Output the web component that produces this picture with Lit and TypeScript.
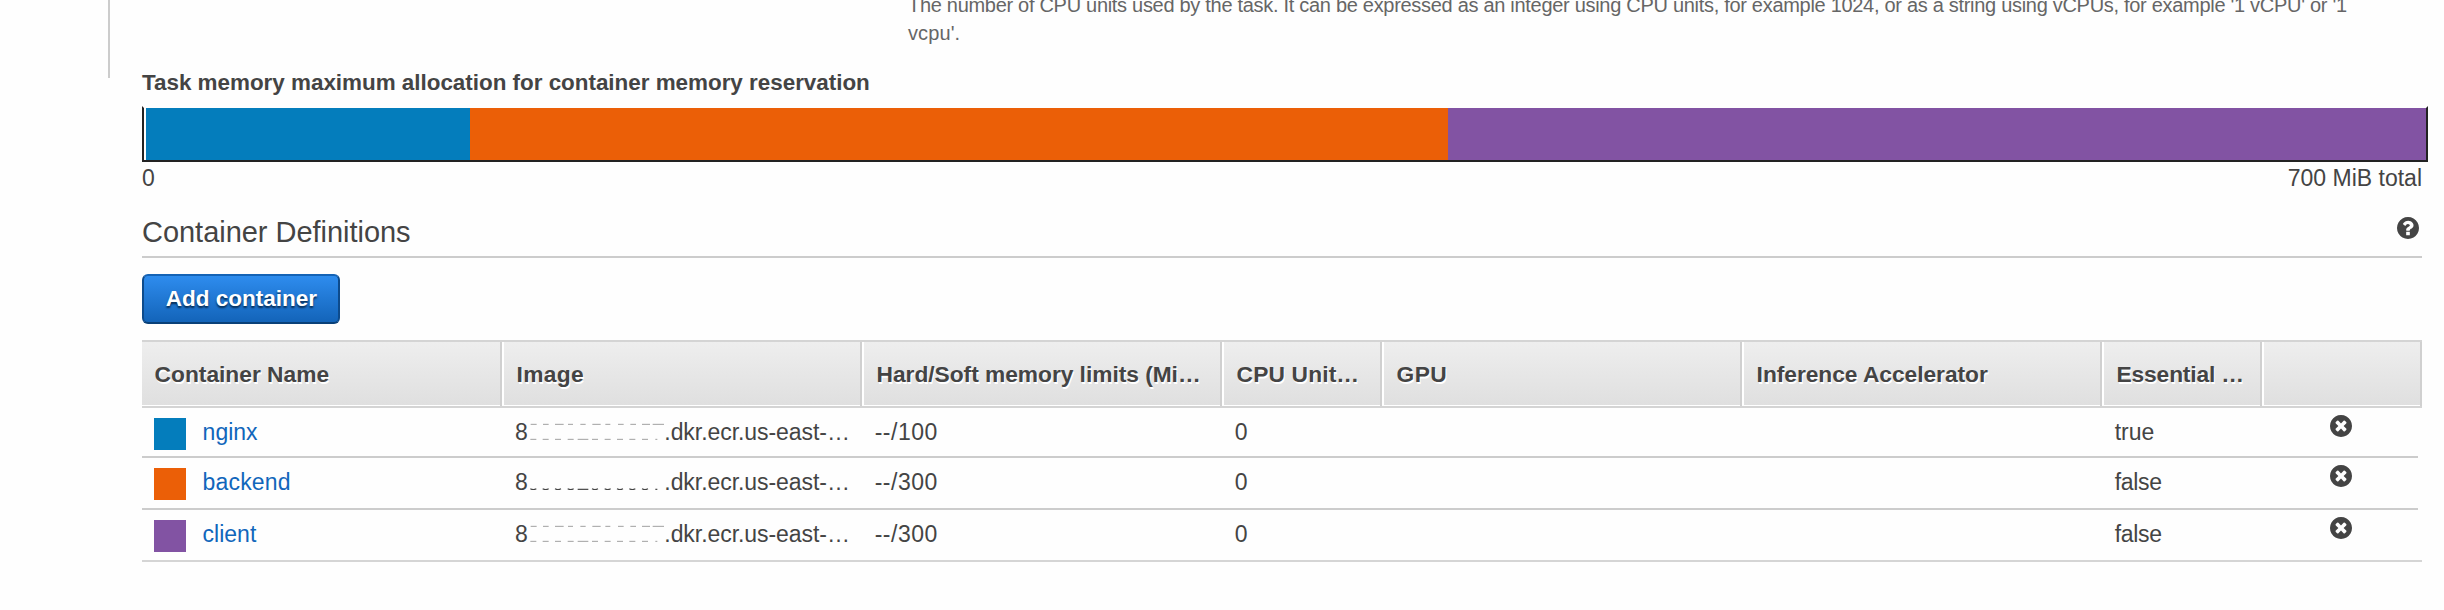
import { LitElement, html, css, svg } from "lit";
import { customElement } from "lit/decorators.js";

interface Container {
  name: string;
  nameClass: string;
  color: string;
  memory: number;
  essential: string;
  rowClass: string;
  masked: boolean;
}

const upper: [number, number][] = [[8, 26], [45, 62], [81, 107], [120, 135], [157, 173], [193, 218], [232, 247], [270, 287], [307, 324], [342, 366], [374, 408]];
const lower: [number, number][] = [[7, 25], [44, 62], [81, 99], [119, 137], [149, 181], [192, 210], [230, 248], [267, 285], [304, 322], [342, 360], [382, 388]];

const containers: Container[] = [
  { name: "nginx", nameClass: "", color: "#047dbc", memory: 100, essential: "true", rowClass: "first", masked: false },
  { name: "backend", nameClass: "wide", color: "#eb5f07", memory: 300, essential: "false", rowClass: "masked", masked: true },
  { name: "client", nameClass: "", color: "#8253a3", memory: 300, essential: "false", rowClass: "last", masked: false },
];

const columns: [string, string][] = [
  ["Container Name", ""],
  ["Image", "wider"],
  ["Hard/Soft memory limits (Mi…", "close"],
  ["CPU Unit…", "wide"],
  ["GPU", "wider"],
  ["Inference Accelerator", "close"],
  ["Essential …", "snug"],
  ["", ""],
];

const disc = "q0 209-103 385.5t-279.5 279.5-385.5 103-385.5-103-279.5-279.5-103-385.5 103-385.5 279.5-279.5 385.5-103 385.5 103 279.5 279.5 103 385.5z";

@customElement("app-root")
export class AppRoot extends LitElement {
  static styles = css`
    :host {
      display: flex;
      align-items: flex-start;
      box-sizing: border-box;
      height: 610px;
      overflow: hidden;
      background: #fefefe;
      color: #444;
      font: 23px/28px "Liberation Sans", Arial, sans-serif;
      white-space: nowrap;
    }
    .gutter { flex: none; width: 34px; height: 78px; margin-left: 108px; box-sizing: border-box; border-left: 2px solid #ccc; }
    .main { width: 2280px; flex: none; }
    .hint { margin: -9px 0 0 766px; font-size: 20px; letter-spacing: -0.297px; color: #666; }
    .hint .tail { letter-spacing: 0.1px; }
    .title { margin-top: 22px; font-size: 22.44px; font-weight: 700; letter-spacing: -0.02px; }
    .bar {
      display: flex;
      box-sizing: border-box;
      width: 2286px;
      height: 56px;
      margin-top: 9px;
      padding-left: 2px;
      border: 2px solid #222;
      border-top-color: transparent;
    }
    .seg { flex-basis: 0; }
    .scale { display: flex; justify-content: space-between; margin-top: 2px; }
    .section { display: flex; justify-content: space-between; height: 42px; margin-top: 22px; border-bottom: 2px solid #ccc; }
    .section h2 { margin: 0; font-size: 29px; font-weight: 400; line-height: 36px; letter-spacing: -0.03px; }
    .help { width: 22px; height: 22px; margin: 3.3px 2.7px 0 0; fill: #444; }
    .add {
      display: flex;
      justify-content: center;
      align-items: center;
      box-sizing: border-box;
      width: 198px;
      height: 50px;
      margin: 16px 0;
      padding: 0 0 1px 1px;
      border: 2px solid;
      border-color: #1563b5 #0d4b8c #094078 #0d4b8c;
      border-radius: 6px;
      background: linear-gradient(#2e8cee, #1364b9);
      color: #fff;
      font: 700 22.5px/28px "Liberation Sans", Arial, sans-serif;
      text-shadow: 0 2px 2px #062a50;
    }
    .grid { display: grid; grid-template-columns: 360px 360px 360px 160px 360px 360px 160px 160px; }
    .head { border: solid #d4d4d4; border-width: 2px 0; }
    .th {
      display: flex;
      align-items: center;
      box-sizing: border-box;
      height: 64px;
      padding-left: 12.6px;
      border-right: 2px solid #d0d0d0;
      background: linear-gradient(#eee, #dfdfdf);
      box-shadow: inset 0 -1px #fff;
      font-size: 22.75px;
      font-weight: 700;
      text-shadow: 1px 2px 0 #fff;
    }
    .th + .th { box-shadow: inset 2px -1px #fff; padding-left: 14.6px; }
    .row { box-sizing: border-box; height: 52px; width: 2276px; border-bottom: 2px solid #ccc; }
    .row.first { height: 50px; }
    .row.last { width: 2280px; border-bottom-color: #d5d5d5; }
    .td { display: flex; padding: 10px 0 0 12.7px; }
    .td.name { padding-left: 12px; color: #1166bb; }
    .swatch { width: 32px; height: 32px; margin-right: 16.6px; }
    .image { padding-left: 13px; }
    .registry { letter-spacing: -0.06px; }
    .traces { width: 136px; height: 28px; margin-right: 0.5px; stroke: #999; stroke-width: 2.8; fill: none; }
    .masked .traces { stroke: #444; stroke-width: 3.6; }
    .remove { padding: 7.3px 0 0 67.5px; }
    .first .remove { padding-top: 6.6px; }
    .remove svg { width: 22px; height: 22px; fill: #444; }
    .wide { letter-spacing: 0.15px; }
    .wider { letter-spacing: 0.35px; }
    .close { letter-spacing: -0.03px; }
    .snug { letter-spacing: -0.15px; }
    .tight { letter-spacing: -0.3px; }
    .loose { letter-spacing: 0.5px; }
  `;

  private traces(masked: boolean) {
    const bottom = ([a, b]: [number, number]) =>
      masked && b - a > 10 && b - a < 25 ? `M${a} 62Q${(a + b) / 2} 67 ${b} 62` : `M${a} 64H${b}`;
    return html`<svg class="traces" viewBox="0 0 408 84">
      ${masked ? "" : upper.map(([a, b]) => svg`<path d="M${a} 19H${b}"/>`)}
      ${lower.map((d) => svg`<path d=${bottom(d)} />`)}
    </svg>`;
  }

  private row(c: Container) {
    return html`<div class="grid row ${c.rowClass}">
      <div class="td name"><span class="swatch" style="background:${c.color}"></span><span class=${c.nameClass}>${c.name}</span></div>
      <div class="td image"><span>8</span>${this.traces(c.masked)}<span class="registry">.dkr.ecr.us-east-…</span></div>
      <div class="td"><span class="loose">--/${c.memory}</span></div>
      <div class="td">0</div>
      <div class="td"></div>
      <div class="td"></div>
      <div class="td"><span class=${c.essential === "false" ? "tight" : ""}>${c.essential}</span></div>
      <div class="td remove"><svg viewBox="128 128 1536 1536"><path d="M1277 1122q0-26-19-45l-181-181 181-181q19-19 19-45 0-27-19-46l-90-90q-19-19-46-19-26 0-45 19l-181 181-181-181q-19-19-45-19-27 0-46 19l-90 90q-19 19-19 46 0 26 19 45l181 181-181 181q-19 19-19 45 0 27 19 46l90 90q19 19 46 19 26 0 45-19l181-181 181 181q19 19 45 19 27 0 46-19l90-90q19-19 19-46zm387-226${disc}"/></svg></div>
    </div>`;
  }

  render() {
    return html`
      <div class="gutter"></div>
      <div class="main">
        <div class="hint">The number of CPU units used by the task. It can be expressed as an integer using CPU units, for example 1024, or as a string using vCPUs, for example '1 vCPU' or '1<br><span class="tail">vcpu'.</span></div>
        <div class="title">Task memory maximum allocation for container memory reservation</div>
        <div class="bar">
          ${containers.map((c, i) => html`<div class="seg" style="background:${c.color};flex-grow:${i === 0 ? 324 : 978}"></div>`)}
        </div>
        <div class="scale"><span>0</span><span>700 MiB total</span></div>
        <div class="section">
          <h2>Container Definitions</h2>
          <svg class="help" viewBox="128 128 1536 1536"><path d="M1024 1376v-192q0-14-9-23t-23-9h-192q-14 0-23 9t-9 23v192q0 14 9 23t23 9h192q14 0 23-9t9-23zm256-672q0-88-55.5-163t-138.5-116-170-41q-243 0-371 213-15 24 8 42l132 100q7 6 19 6 16 0 25-12 53-68 86-92 34-24 86-24 48 0 85.5 26t37.5 59q0 38-20 61t-68 45q-63 28-115.5 86.5t-52.5 125.5v36q0 14 9 23t23 9h192q14 0 23-9t9-23q0-19 21.5-49.5t54.5-49.5q32-18 49-28.5t46-35 44.5-48 28-60.5 12.5-81zm384 192${disc}"/></svg>
        </div>
        <button class="add">Add container</button>
        <div class="grid head">
          ${columns.map(([label, cls]) => html`<div class="th"><span class=${cls}>${label}</span></div>`)}
        </div>
        ${containers.map((c) => this.row(c))}
      </div>
    `;
  }
}
